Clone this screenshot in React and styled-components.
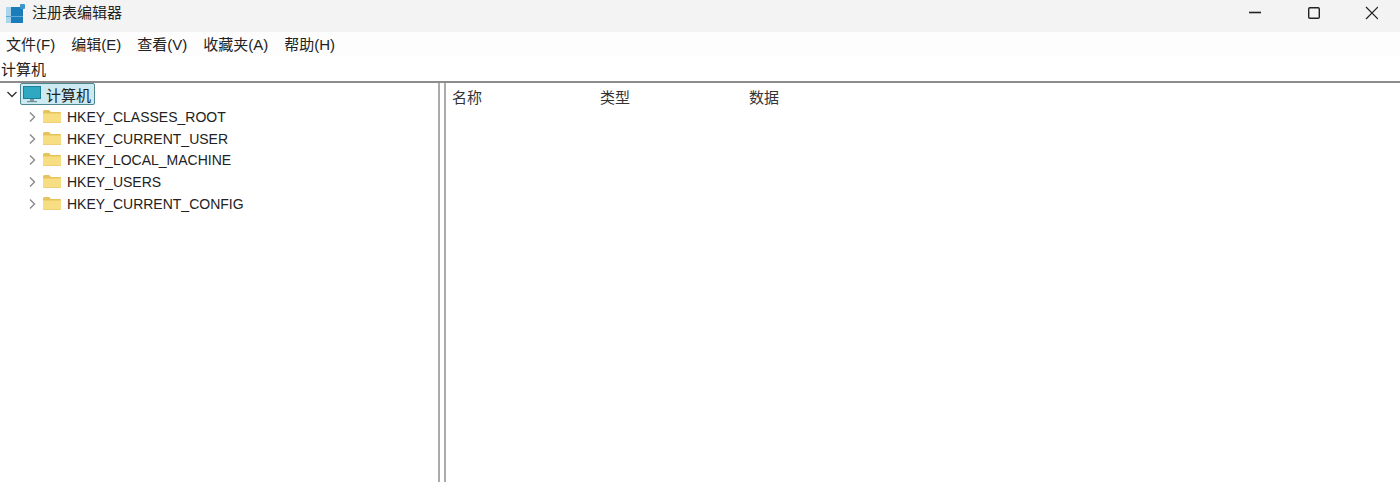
import React from "react";
import styled, { createGlobalStyle } from "styled-components";

const GlobalStyle = createGlobalStyle`
  html, body {
    margin: 0;
    padding: 0;
    background: #fff;
  }
  body {
    font-family: "Liberation Sans", "Noto Sans CJK SC", sans-serif;
    color: #1c1c1c;
  }
`;

const Window = styled.div`
  width: 1400px;
  height: 482px;
  display: flex;
  flex-direction: column;
  overflow: hidden;
`;

const TitleBar = styled.div`
  height: 32px;
  flex: none;
  display: flex;
  align-items: flex-start;
  background: #f3f3f3;
`;
const AppIcon = styled.svg`
  width: 20px;
  height: 20px;
  margin: 4px 0 0 5px;
  flex: none;
`;
const TitleText = styled.span`
  margin: 4px 0 0 7px;
  font-size: 15px;
  line-height: 18px;
  color: #222;
`;
const WindowButtons = styled.div`
  margin-left: auto;
  display: flex;
`;
const WindowButton = styled.div`
  width: 58px;
  height: 26px;
  display: flex;
  align-items: center;
  justify-content: center;
`;

const MenuBar = styled.div`
  height: 24px;
  flex: none;
  display: flex;
  align-items: center;
  padding: 0 0 1px 6px;
  box-sizing: border-box;
  gap: 16px;
  background: #fdfdfd;
`;
const MenuItem = styled.span`
  font-size: 15px;
  color: #222;
`;

const AddressBar = styled.div`
  height: 27px;
  flex: none;
  display: flex;
  align-items: center;
  padding: 0 0 1px 1px;
  box-sizing: border-box;
  font-size: 15px;
  color: #222;
  background: #fff;
  border-bottom: 2px solid #8c8c8c;
`;

const Panes = styled.div`
  flex: 1;
  display: flex;
  min-height: 0;
`;
const TreePane = styled.div`
  width: 438px;
  flex: none;
  box-sizing: border-box;
`;
const Splitter = styled.div`
  width: 8px;
  flex: none;
  box-sizing: border-box;
  border-left: 2px solid #ababab;
  border-right: 2px solid #ababab;
`;
const ListPane = styled.div`
  flex: 1;
`;

const TreeRow = styled.div`
  height: 21.7px;
  display: flex;
  align-items: center;
  padding-left: ${(p) => p.$indent}px;
`;
const RootRow = styled(TreeRow)`
  height: 22px;
  margin-bottom: 1px;
`;
const Chevron = styled.svg`
  width: 12px;
  height: 12px;
  flex: none;
`;
const SelectedLabel = styled.div`
  display: flex;
  align-items: center;
  height: 22px;
  width: 75px;
  margin-left: 2px;
  padding: 0 0 0 1px;
  box-sizing: border-box;
  background: #cdeaf2;
  border: 1px solid #4f8791;
  border-radius: 2px;
  font-size: 15px;
  color: #222;
`;
const RootName = styled.span`
  margin-left: 4px;
`;
const Folder = styled.svg`
  width: 20px;
  height: 16px;
  margin-left: 4px;
  flex: none;
`;
const KeyName = styled.span`
  margin-left: 5px;
  font-size: 14px;
  color: #222;
`;

const ListHeader = styled.div`
  display: grid;
  grid-template-columns: 148px 149px 1fr;
  padding: 3px 0 0 6px;
  font-size: 15px;
  color: #333;
`;

const menus = ["文件(F)", "编辑(E)", "查看(V)", "收藏夹(A)", "帮助(H)"];
const hives = [
  "HKEY_CLASSES_ROOT",
  "HKEY_CURRENT_USER",
  "HKEY_LOCAL_MACHINE",
  "HKEY_USERS",
  "HKEY_CURRENT_CONFIG",
];

function FolderIcon() {
  return (
    <Folder viewBox="0 0 20 16">
      <path d="M1 2.5 Q1 1 2.5 1 H7 L9 3 H18 Q19 3 19 4 V14 H1 Z" fill="#e6c35c" />
      <rect x="1" y="4.5" width="18" height="9.5" fill="#f8de82" />
      <rect x="1" y="13" width="18" height="1" fill="#eed078" />
    </Folder>
  );
}

export default function App() {
  return (
    <Window>
      <GlobalStyle />
      <TitleBar>
        <AppIcon viewBox="0 0 20 20">
          <rect x="1" y="3" width="5" height="16" fill="#a9d5ec" />
          <rect x="6" y="3" width="12" height="16" fill="#1a7dba" />
          <rect x="1" y="12" width="17" height="1" fill="#5fa9d6" />
          <rect x="15" y="0" width="5" height="5" rx="1" fill="#3f94cc" />
        </AppIcon>
        <TitleText>注册表编辑器</TitleText>
        <WindowButtons>
          <WindowButton>
            <svg width="14" height="14" viewBox="0 0 14 14">
              <path d="M1 6.5 H13" stroke="#222" strokeWidth="1.6" />
            </svg>
          </WindowButton>
          <WindowButton>
            <svg width="14" height="14" viewBox="0 0 14 14">
              <rect x="2.7" y="1.7" width="10.6" height="10.6" rx="1.2" fill="none" stroke="#222" strokeWidth="1.4" />
            </svg>
          </WindowButton>
          <WindowButton>
            <svg width="14" height="14" viewBox="0 0 14 14">
              <path d="M2 1 L14 13 M14 1 L2 13" stroke="#222" strokeWidth="1.2" />
            </svg>
          </WindowButton>
        </WindowButtons>
      </TitleBar>
      <MenuBar>
        {menus.map((m) => (
          <MenuItem key={m}>{m}</MenuItem>
        ))}
      </MenuBar>
      <AddressBar>计算机</AddressBar>
      <Panes>
        <TreePane>
          <RootRow $indent={6}>
            <Chevron viewBox="0 0 12 12">
              <path d="M1.5 4 L6 8.5 L10.5 4" fill="none" stroke="#333" strokeWidth="1.3" />
            </Chevron>
            <SelectedLabel>
              <svg width="20" height="18" viewBox="0 0 20 18">
                <rect x="1" y="1" width="18" height="13" fill="#1c7f98" />
                <rect x="2" y="2" width="16" height="11" fill="#2fa9c2" />
                <rect x="8" y="14" width="4" height="2" fill="#7f9aa3" />
                <rect x="5" y="16" width="10" height="1.2" fill="#6f8f99" />
              </svg>
              <RootName>计算机</RootName>
            </SelectedLabel>
          </RootRow>
          {hives.map((h) => (
            <TreeRow key={h} $indent={26}>
              <Chevron viewBox="0 0 12 12">
                <path d="M4 1.5 L8.5 6 L4 10.5" fill="none" stroke="#8a8a8a" strokeWidth="1.4" />
              </Chevron>
              <FolderIcon />
              <KeyName>{h}</KeyName>
            </TreeRow>
          ))}
        </TreePane>
        <Splitter />
        <ListPane>
          <ListHeader>
            <span>名称</span>
            <span>类型</span>
            <span>数据</span>
          </ListHeader>
        </ListPane>
      </Panes>
    </Window>
  );
}
